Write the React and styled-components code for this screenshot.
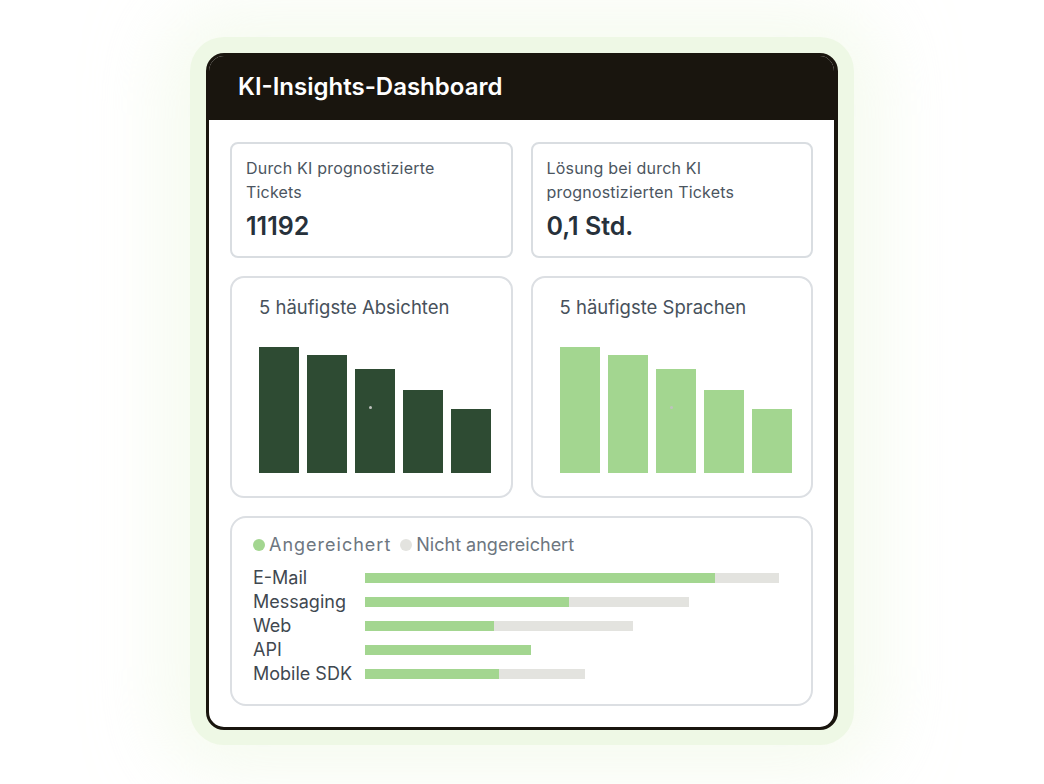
import React from "react";
import styled, { createGlobalStyle } from "styled-components";

const GlobalStyle = createGlobalStyle`
  body {
    margin: 0;
    background: #ffffff;
    font-family: Inter, "Noto Sans", "Liberation Sans", sans-serif;
  }
`;

const Stage = styled.div`
  min-height: 784px;
  display: flex;
  justify-content: center;
  align-items: flex-start;
  padding-top: 37px;
  box-sizing: border-box;
`;

const Glow = styled.div`
  padding: 16px 16px 15px 16px;
  border-radius: 34px;
  background: #eef8e5;
  box-shadow: 0 0 70px 30px rgba(238, 248, 228, 0.55);
`;

const Card = styled.div`
  width: 632px;
  box-sizing: border-box;
  border: 3px solid #19150e;
  border-right-width: 4px;
  border-radius: 18px;
  background: #ffffff;
  overflow: hidden;
`;

const Header = styled.div`
  height: 64px;
  box-sizing: border-box;
  background: #19150e;
  display: flex;
  align-items: center;
  padding: 0 0 3px 29px;
  color: #ffffff;
  font-size: 24px;
  font-weight: 600;
`;

const Body = styled.div`
  padding: 22px 21px 21px 21px;
  display: flex;
  flex-direction: column;
  gap: 18px;
`;

const Row = styled.div`
  display: grid;
  grid-template-columns: 1fr 1fr;
  gap: 18px;
`;

const StatCard = styled.div`
  height: 116px;
  box-sizing: border-box;
  border: 2px solid #d9dde1;
  border-radius: 8px;
  padding: 12px 40px 0 14px;
`;

const StatLabel = styled.div`
  font-size: 16px;
  line-height: 24px;
  color: #4b5560;
  letter-spacing: 0.2px;
`;

const StatValue = styled.div`
  margin-top: 7px;
  font-size: 25px;
  line-height: 30px;
  font-weight: 600;
  color: #27313b;
`;

const ChartCard = styled.div`
  height: 222px;
  box-sizing: border-box;
  border: 2px solid #dcdfe3;
  border-radius: 14px;
  padding: 17px 0 0 27px;
`;

const ChartTitle = styled.div`
  font-size: 18.5px;
  line-height: 24px;
  color: #47515b;
`;

const Bars = styled.div`
  position: relative;
  margin-top: 28px;
  height: 126px;
  display: flex;
  align-items: flex-end;
  gap: 8px;
`;

const Bar = styled.div`
  width: 40px;
  background: ${(p) => p.$color};
`;

const Dot = styled.span`
  position: absolute;
  left: 110px;
  top: 59px;
  width: 3px;
  height: 3px;
  border-radius: 50%;
  background: #bfc2bf;
`;

const ChannelCard = styled.div`
  height: 190px;
  box-sizing: border-box;
  border: 2px solid #dcdfe3;
  border-radius: 16px;
  padding: 15px 0 0 21px;
`;

const Legend = styled.div`
  display: flex;
  align-items: center;
  font-size: 18px;
  line-height: 24px;
  color: #6d7680;
`;

const LegendItem = styled.span`
  display: flex;
  align-items: center;
  gap: 4px;
  margin-right: 9px;
  letter-spacing: ${(p) => p.$spacing || "0"};
`;

const LegendDot = styled.span`
  width: 12px;
  height: 12px;
  border-radius: 50%;
  background: ${(p) => p.$color};
`;

const Channels = styled.div`
  margin-top: 9px;
  display: flex;
  flex-direction: column;
`;

const Channel = styled.div`
  display: flex;
  align-items: center;
  height: 24px;
`;

const ChannelLabel = styled.div`
  width: 112px;
  font-size: 18px;
  line-height: 24px;
  color: #3f4850;
`;

const Track = styled.div`
  height: 10px;
  background: #e3e3df;
  display: flex;
`;

const Fill = styled.div`
  height: 100%;
  background: #a3d690;
`;

const DARK = "#2e4b33";
const LIGHT = "#a3d690";
const heights = [126, 118, 104, 83, 64];

const channels = [
  { name: "E-Mail", total: 414, done: 350 },
  { name: "Messaging", total: 324, done: 204 },
  { name: "Web", total: 268, done: 129 },
  { name: "API", total: 166, done: 166 },
  { name: "Mobile SDK", total: 220, done: 134 },
];

const BarChart = ({ title, color }) => (
  <ChartCard>
    <ChartTitle>{title}</ChartTitle>
    <Bars>
      {heights.map((h, i) => (
        <Bar key={i} $color={color} style={{ height: h }} />
      ))}
      <Dot />
    </Bars>
  </ChartCard>
);

export default function App() {
  return (
    <>
      <GlobalStyle />
      <Stage>
        <Glow>
          <Card>
            <Header>KI-Insights-Dashboard</Header>
            <Body>
              <Row>
                <StatCard>
                  <StatLabel>Durch KI prognostizierte Tickets</StatLabel>
                  <StatValue>11192</StatValue>
                </StatCard>
                <StatCard>
                  <StatLabel>Lösung bei durch KI prognostizierten Tickets</StatLabel>
                  <StatValue>0,1 Std.</StatValue>
                </StatCard>
              </Row>
              <Row>
                <BarChart title="5 häufigste Absichten" color={DARK} />
                <BarChart title="5 häufigste Sprachen" color={LIGHT} />
              </Row>
              <ChannelCard>
                <Legend>
                  <LegendItem $spacing="1px">
                    <LegendDot $color="#a3d690" />
                    Angereichert
                  </LegendItem>
                  <LegendItem>
                    <LegendDot $color="#e3e3df" />
                    Nicht angereichert
                  </LegendItem>
                </Legend>
                <Channels>
                  {channels.map((c) => (
                    <Channel key={c.name}>
                      <ChannelLabel>{c.name}</ChannelLabel>
                      <Track style={{ width: c.total }}>
                        <Fill style={{ width: c.done }} />
                      </Track>
                    </Channel>
                  ))}
                </Channels>
              </ChannelCard>
            </Body>
          </Card>
        </Glow>
      </Stage>
    </>
  );
}
